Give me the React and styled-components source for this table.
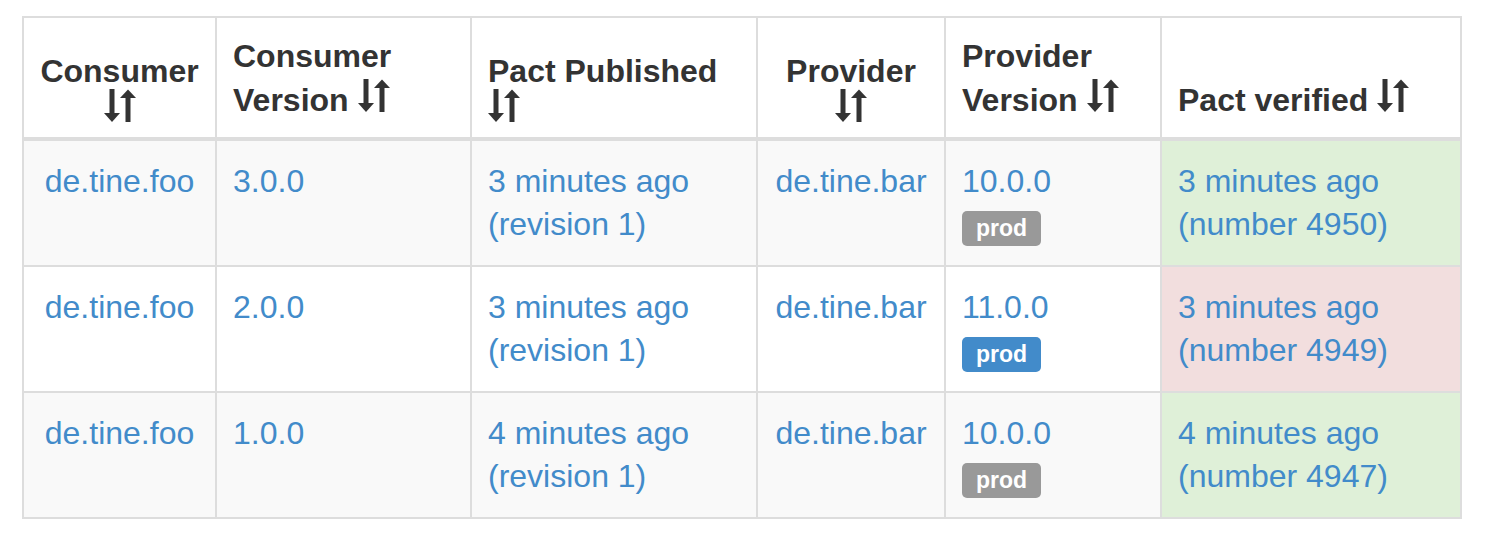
import styled, {createGlobalStyle} from "styled-components";

const GlobalStyle = createGlobalStyle`
  body {
    margin: 0;
    background: #fff;
    font-family: "Liberation Sans", Arial, sans-serif;
    color: #333;
  }
`;

const Page = styled.div`
  padding: 16px 0 0 22px;
`;

const Table = styled.table`
  width: 1440px;
  table-layout: fixed;
  border-collapse: collapse;
  border: 2px solid #ddd;
  font-size: 32px;
  line-height: 43px;
`;

const HeadCell = styled.th`
  border: 2px solid #ddd;
  border-bottom-width: 4px;
  padding: 16px 16px 15px;
  vertical-align: bottom;
  text-align: ${p => p.$center ? "center" : "left"};
  font-weight: bold;
  line-height: 44px;
  color: #333;
`;

const Row = styled.tr`
  background: ${p => p.$striped ? "#f9f9f9" : "#fff"};
`;

const Cell = styled.td`
  border: 2px solid #ddd;
  padding: 19px 16px 19px 16px;
  vertical-align: top;
  text-align: ${p => p.$center ? "center" : "left"};
  background: ${p => p.$status === "success" ? "#dff0d8" : p.$status === "failed" ? "#f2dede" : "transparent"};
`;

const Link = styled.a`
  display: block;
  color: #428bca;
  text-decoration: none;
  white-space: nowrap;
`;

const Badge = styled.span`
  display: inline-block;
  vertical-align: top;
  margin-top: 8px;
  height: 35px;
  line-height: 35px;
  padding: 0 14px;
  border-radius: 5px;
  background: ${p => p.$primary ? "#428bca" : "#999"};
  color: #fff;
  font-size: 23px;
  font-weight: bold;
`;

const SortSvg = styled.svg`
  display: ${p => p.$stacked ? "block" : "inline-block"};
  margin: ${p => !p.$stacked ? "0" : p.$center ? "-4px auto 0" : "-4px 0 0"};
  vertical-align: -1px;
`;

const SortIcon = ({stacked, center}) => (
    <SortSvg $stacked={stacked} $center={center} width="32" height="33" viewBox="0 0 32 33" fill="#333">
        <rect x="5.5" y="0" width="5" height="24"/>
        <polygon points="0,24 16,24 8,33"/>
        <polygon points="16,9 32,9 24,0.5"/>
        <rect x="21.5" y="8" width="5" height="25"/>
    </SortSvg>
);

const columns = [
    {label: "Consumer", width: 193, stacked: true, center: true},
    {label: "Consumer Version", width: 255},
    {label: "Pact Published", width: 286, stacked: true},
    {label: "Provider", width: 188, stacked: true, center: true},
    {label: "Provider Version", width: 216},
    {label: "Pact verified", width: 300},
];

const rows = [
    {consumer: "de.tine.foo", cv: "3.0.0", published: "3 minutes ago", provider: "de.tine.bar", pv: "10.0.0", primary: false, verified: "3 minutes ago", number: 4950, status: "success"},
    {consumer: "de.tine.foo", cv: "2.0.0", published: "3 minutes ago", provider: "de.tine.bar", pv: "11.0.0", primary: true, verified: "3 minutes ago", number: 4949, status: "failed"},
    {consumer: "de.tine.foo", cv: "1.0.0", published: "4 minutes ago", provider: "de.tine.bar", pv: "10.0.0", primary: false, verified: "4 minutes ago", number: 4947, status: "success"},
];

const App = () => {
    return <Page>
        <GlobalStyle/>
        <Table>
            <colgroup>
                {columns.map(c => <col key={c.label} style={{width: c.width}}/>)}
            </colgroup>
            <thead>
            <tr>
                {columns.map(c => (
                    <HeadCell key={c.label} $center={c.center}>
                        {c.label}
                        {c.stacked ? <SortIcon stacked center={c.center}/> : <> <SortIcon/></>}
                    </HeadCell>
                ))}
            </tr>
            </thead>
            <tbody>
            {rows.map((r, i) => (
                <Row key={r.number} $striped={i % 2 === 0}>
                    <Cell $center><Link href="#">{r.consumer}</Link></Cell>
                    <Cell><Link href="#">{r.cv}</Link></Cell>
                    <Cell>
                        <Link href="#">{r.published}</Link>
                        <Link href="#">(revision 1)</Link>
                    </Cell>
                    <Cell $center><Link href="#">{r.provider}</Link></Cell>
                    <Cell>
                        <Link href="#">{r.pv}</Link>
                        <div><Badge $primary={r.primary}>prod</Badge></div>
                    </Cell>
                    <Cell $status={r.status}>
                        <Link href="#">{r.verified}</Link>
                        <Link href="#">(number {r.number})</Link>
                    </Cell>
                </Row>
            ))}
            </tbody>
        </Table>
    </Page>
}

export default App;
